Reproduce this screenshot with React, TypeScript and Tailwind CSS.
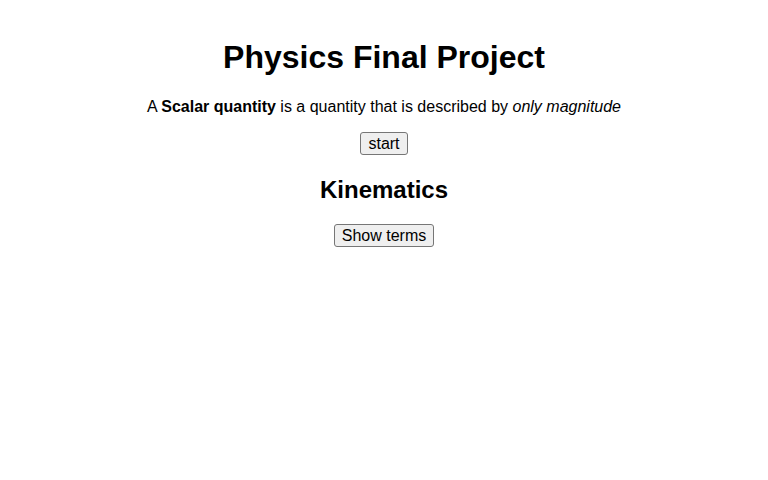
export default function App() {
  return (
    <div
      className="min-h-screen bg-white text-black flex flex-col items-center pt-[39px]"
      style={{ fontFamily: '"Liberation Sans", Arial, sans-serif' }}
    >
      <h1 className="text-[32px] leading-[37px] font-bold">Physics Final Project</h1>
      <p className="mt-[22px] text-[16px] leading-[18px]">
        A <b>Scalar quantity</b> is a quantity that is described by <i>only magnitude</i>
      </p>
      <button className="mt-[16px] h-[23px] px-[7px] text-[16px] leading-[18px] bg-[#efefef] border border-[#767676] rounded-[3px]">
        start
      </button>
      <h2 className="mt-[21px] text-[24px] leading-[28px] font-bold">Kinematics</h2>
      <button className="mt-[20px] h-[23px] px-[7px] text-[16px] leading-[18px] bg-[#efefef] border border-[#767676] rounded-[3px]">
        Show terms
      </button>
    </div>
  );
}
